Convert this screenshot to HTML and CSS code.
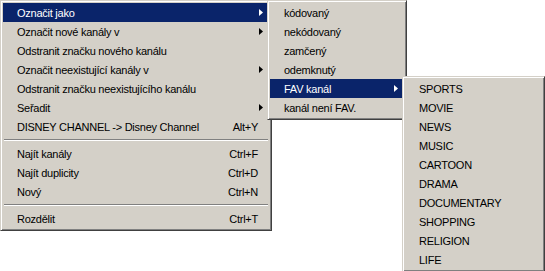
FILE: index.html
```html
<!DOCTYPE html>
<html lang="cs">
<head>
<meta charset="utf-8">
<title>Menu</title>
<link rel="stylesheet" href="styles.css">
</head>
<body>
<div class="menu main">
  <div class="item active has-sub">
    <span class="label">Označit jako</span>
    <svg class="arrow" viewBox="0 0 4 7"><polygon points="0,0 4,3.5 0,7"/></svg>
    <div class="menu sub1">
      <div class="item"><span class="label">kódovaný</span></div>
      <div class="item"><span class="label">nekódovaný</span></div>
      <div class="item"><span class="label">zamčený</span></div>
      <div class="item"><span class="label">odemknutý</span></div>
      <div class="item active has-sub">
        <span class="label">FAV kanál</span>
        <svg class="arrow" viewBox="0 0 4 7"><polygon points="0,0 4,3.5 0,7"/></svg>
        <div class="menu sub2">
          <div class="item"><span class="label">SPORTS</span></div>
          <div class="item"><span class="label">MOVIE</span></div>
          <div class="item"><span class="label">NEWS</span></div>
          <div class="item"><span class="label">MUSIC</span></div>
          <div class="item"><span class="label">CARTOON</span></div>
          <div class="item"><span class="label">DRAMA</span></div>
          <div class="item"><span class="label">DOCUMENTARY</span></div>
          <div class="item"><span class="label">SHOPPING</span></div>
          <div class="item"><span class="label">RELIGION</span></div>
          <div class="item"><span class="label">LIFE</span></div>
        </div>
      </div>
      <div class="item"><span class="label">kanál není FAV.</span></div>
    </div>
  </div>
  <div class="item has-sub">
    <span class="label">Označit nové kanály v</span>
    <svg class="arrow" viewBox="0 0 4 7"><polygon points="0,0 4,3.5 0,7"/></svg>
  </div>
  <div class="item"><span class="label">Odstranit značku nového kanálu</span></div>
  <div class="item has-sub">
    <span class="label">Označit neexistující kanály v</span>
    <svg class="arrow" viewBox="0 0 4 7"><polygon points="0,0 4,3.5 0,7"/></svg>
  </div>
  <div class="item"><span class="label">Odstranit značku neexistujícího kanálu</span></div>
  <div class="item has-sub">
    <span class="label">Seřadit</span>
    <svg class="arrow" viewBox="0 0 4 7"><polygon points="0,0 4,3.5 0,7"/></svg>
  </div>
  <div class="item"><span class="label">DISNEY CHANNEL -&gt; Disney Channel</span><span class="shortcut">Alt+Y</span></div>
  <div class="sep"></div>
  <div class="item"><span class="label">Najít kanály</span><span class="shortcut">Ctrl+F</span></div>
  <div class="item"><span class="label">Najít duplicity</span><span class="shortcut">Ctrl+D</span></div>
  <div class="item"><span class="label">Nový</span><span class="shortcut">Ctrl+N</span></div>
  <div class="sep"></div>
  <div class="item"><span class="label">Rozdělit</span><span class="shortcut">Ctrl+T</span></div>
</div>
</body>
</html>
```
FILE: styles.css
```css
html, body {
  margin: 0;
  background: #ffffff;
}

body {
  min-height: 271px;
  font-family: "Liberation Sans", Arial, sans-serif;
  font-size: 11px;
  letter-spacing: -0.25px;
  color: #000000;
}

.menu {
  box-sizing: border-box;
  background: #d4d0c8;
  border: 1px solid;
  border-color: #d4d0c8 #404040 #404040 #d4d0c8;
  box-shadow: inset 1px 1px 0 #ffffff, inset -1px -1px 0 #808080;
  padding: 2px;
  color: #000000;
}

.main {
  width: 272px;
}

.item {
  position: relative;
  height: 19px;
  display: flex;
  align-items: center;
  padding: 0 11px 0 14px;
  white-space: nowrap;
}

.item.has-sub {
  padding-right: 6px;
}

.item.active {
  background: #0a246a;
  color: #ffffff;
}

.shortcut,
.arrow {
  margin-left: auto;
}

.arrow {
  width: 4px;
  height: 7px;
  fill: currentColor;
}

.sep {
  position: relative;
  height: 8px;
}

.sep::before {
  content: "";
  position: absolute;
  left: 1px;
  right: 1px;
  top: 3px;
  height: 1px;
  background: #808080;
  border-bottom: 1px solid #ffffff;
}

.sub1 {
  position: absolute;
  left: 264px;
  top: -3px;
  width: 140px;
}

.sub2 {
  position: absolute;
  left: 132px;
  top: -3px;
  width: 143px;
}
```
